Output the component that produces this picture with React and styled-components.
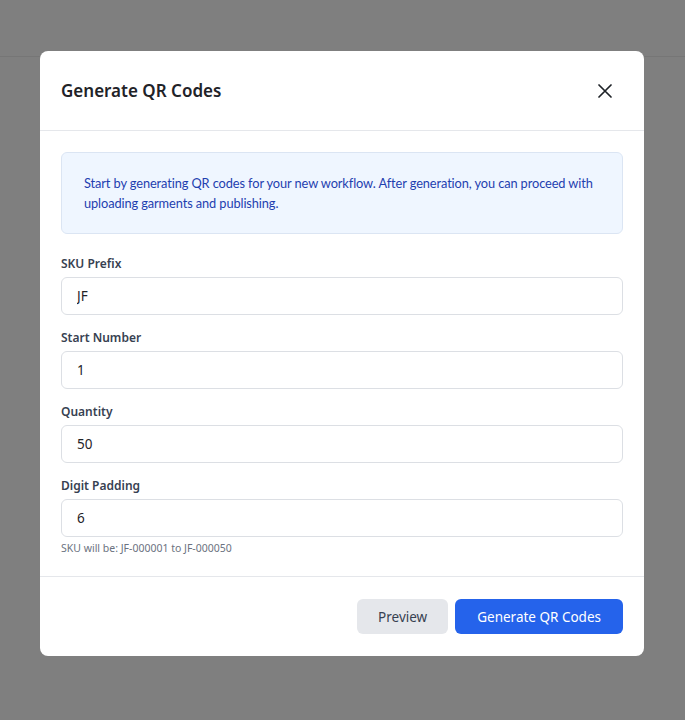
import styled, { createGlobalStyle } from "styled-components";

const GlobalStyle = createGlobalStyle`
  * {
    box-sizing: border-box;
  }
  body {
    margin: 0;
    font-family: "Noto Sans", "Open Sans", sans-serif;
    background: #fff;
  }
`;

const Page = styled.div`
  position: relative;
  width: 100%;
  height: 720px;
  background: #ffffff;
`;

const TopBar = styled.header`
  height: 57px;
  border-bottom: 1px solid #ececec;
`;

const Overlay = styled.div`
  position: absolute;
  inset: 0;
  background: rgba(0, 0, 0, 0.5);
  display: flex;
  justify-content: flex-start;
  padding: 51px 0 0 40px;
`;

const Modal = styled.div`
  width: 604px;
  height: 605px;
  background: #fff;
  border-radius: 8px;
  display: flex;
  flex-direction: column;
  overflow: hidden;
`;

const Header = styled.div`
  height: 80px;
  display: flex;
  align-items: center;
  justify-content: space-between;
  padding: 0 21px;
  border-bottom: 1px solid #e5e7eb;
`;

const Title = styled.h2`
  margin: 0;
  font-size: 17px;
  font-weight: 600;
  color: #1f2328;
`;

const CloseButton = styled.button`
  border: none;
  background: none;
  padding: 4px;
  margin-right: 7px;
  display: flex;
  align-items: center;
  color: #1f2328;
  cursor: pointer;
`;

const Body = styled.div`
  padding: 21px 21px 0;
  display: flex;
  flex-direction: column;
  gap: 13px;
  flex: 1;
`;

const InfoBox = styled.div`
  background: #eff6ff;
  border: 1px solid #dbe5f3;
  border-radius: 6px;
  padding: 20px 22px;
  margin-bottom: 7px;
`;

const InfoText = styled.p`
  margin: 0;
  font-family: "Lato", "Noto Sans", sans-serif;
  font-size: 12.8px;
  letter-spacing: -0.1px;
  line-height: 20px;
  color: #1e40af;
`;

const Field = styled.div`
  display: flex;
  flex-direction: column;
  gap: 4px;
`;

const Label = styled.label`
  font-size: 12px;
  font-weight: 600;
  line-height: 19px;
  color: #374151;
`;

const Input = styled.input`
  height: 38px;
  border: 1px solid #dcdfe4;
  border-radius: 6px;
  padding: 0 15px;
  font-family: inherit;
  font-size: 13.5px;
  color: #1f2328;
  outline: none;
`;

const Hint = styled.span`
  font-size: 10.5px;
  color: #6b7280;
`;

const Footer = styled.div`
  height: 80px;
  border-top: 1px solid #e5e7eb;
  display: flex;
  justify-content: flex-end;
  align-items: flex-start;
  gap: 7px;
  padding: 22px 21px 0;
`;

const Button = styled.button`
  height: 35px;
  border: none;
  border-radius: 6px;
  padding: 0 ${(p) => (p.$primary ? "22px" : "21px")};
  font-family: inherit;
  font-size: 13.5px;
  background: ${(p) => (p.$primary ? "#2563eb" : "#e5e7eb")};
  color: ${(p) => (p.$primary ? "#ffffff" : "#374151")};
  cursor: pointer;
`;

const fields = [
  { label: "SKU Prefix", value: "JF" },
  { label: "Start Number", value: "1" },
  { label: "Quantity", value: "50" },
  { label: "Digit Padding", value: "6" },
];

const App = () => {
  return (
    <>
      <GlobalStyle />
      <Page>
        <TopBar />
        <Overlay>
          <Modal>
            <Header>
              <Title>Generate QR Codes</Title>
              <CloseButton aria-label="Close">
                <svg width="14" height="14" viewBox="0 0 14 14" fill="none">
                  <path
                    d="M1 1L13 13M13 1L1 13"
                    stroke="currentColor"
                    strokeWidth="1.7"
                    strokeLinecap="round"
                  />
                </svg>
              </CloseButton>
            </Header>
            <Body>
              <InfoBox>
                <InfoText>
                  Start by generating QR codes for your new workflow. After
                  generation, you can proceed with uploading garments and
                  publishing.
                </InfoText>
              </InfoBox>
              {fields.map((f, i) => (
                <Field key={f.label}>
                  <Label>{f.label}</Label>
                  <Input type="text" defaultValue={f.value} />
                  {i === fields.length - 1 && (
                    <Hint>SKU will be: JF-000001 to JF-000050</Hint>
                  )}
                </Field>
              ))}
            </Body>
            <Footer>
              <Button>Preview</Button>
              <Button $primary>Generate QR Codes</Button>
            </Footer>
          </Modal>
        </Overlay>
      </Page>
    </>
  );
};

export default App;
